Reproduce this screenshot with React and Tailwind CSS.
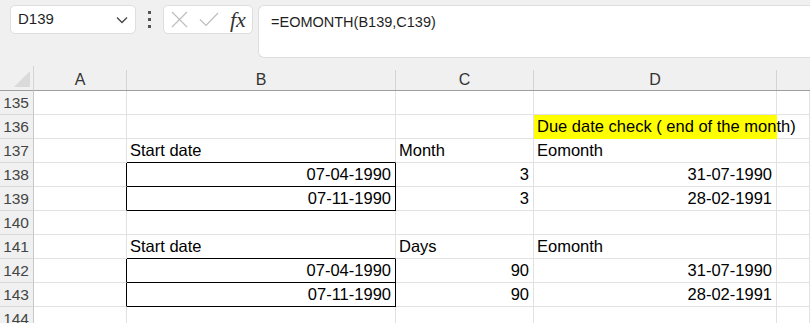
const cols = ['A', 'B', 'C', 'D'];

const rows = [
  { n: 135, cells: {} },
  { n: 136, cells: { D: { text: 'Due date check ( end of the month)', hl: true } } },
  { n: 137, cells: { B: { text: 'Start date' }, C: { text: 'Month' }, D: { text: 'Eomonth' } } },
  { n: 138, cells: { B: { text: '07-04-1990', right: true }, C: { text: '3', right: true }, D: { text: '31-07-1990', right: true } } },
  { n: 139, cells: { B: { text: '07-11-1990', right: true }, C: { text: '3', right: true }, D: { text: '28-02-1991', right: true } } },
  { n: 140, cells: {} },
  { n: 141, cells: { B: { text: 'Start date' }, C: { text: 'Days' }, D: { text: 'Eomonth' } } },
  { n: 142, cells: { B: { text: '07-04-1990', right: true }, C: { text: '90', right: true }, D: { text: '31-07-1990', right: true } } },
  { n: 143, cells: { B: { text: '07-11-1990', right: true }, C: { text: '90', right: true }, D: { text: '28-02-1991', right: true } } },
  { n: 144, cells: {} },
];

// rows whose B cell carries the black box
const boxed = [138, 139, 142, 143];

function cellClass(col, n) {
  let right = 'border-r-[#e1e1e1]';
  let bottom = 'border-b-[#e1e1e1]';
  if (col === 'A' && boxed.includes(n)) right = 'border-r-black';
  if (col === 'B' && boxed.includes(n)) { right = 'border-r-black'; bottom = 'border-b-black'; }
  if (col === 'B' && (n === 137 || n === 141)) bottom = 'border-b-black';
  return `${right} ${bottom}`;
}

function Toolbar() {
  return (
    <div className="flex h-[66px] bg-[#f0f0f0] pt-[5px] pl-[10px]">
      <div className="flex h-[29px] w-[126px] items-center justify-between rounded-[5px] border border-[#dedede] bg-white pl-[7px] pr-[7px]">
        <span className="text-[15px] text-[#1f1f1f]">D139</span>
        <svg width="12" height="8" viewBox="0 0 12 8" fill="none" stroke="#444" strokeWidth="1.3">
          <path d="M1 1.5l5 5 5-5" />
        </svg>
      </div>
      <div className="flex w-[27px] flex-col items-center gap-[4px] pt-[6px]">
        <span className="h-[3px] w-[3px] bg-[#555]"></span>
        <span className="h-[3px] w-[3px] bg-[#555]"></span>
        <span className="h-[3px] w-[3px] bg-[#555]"></span>
      </div>
      <div className="flex h-[29px] w-[90px] items-center rounded-[5px] border border-[#dedede] bg-white pl-[7px]">
        <svg width="17" height="17" viewBox="0 0 17 17" fill="none" stroke="#bdbdbd" strokeWidth="1.2">
          <path d="M1 1l15 15M16 1L1 16" />
        </svg>
        <svg className="ml-[11px]" width="20" height="15" viewBox="0 0 20 15" fill="none" stroke="#bdbdbd" strokeWidth="1.2">
          <path d="M1 7.5l6 6L19 1" />
        </svg>
        <span className="ml-[11px] font-['Liberation_Serif',serif] text-[22px] italic leading-none text-[#333]">fx</span>
      </div>
      <div className="ml-[5px] h-[53px] flex-1 rounded-l-[6px] border border-r-0 border-[#dedede] bg-white pl-[12px] pt-[4px]">
        <span className="text-[14.5px] text-[#1f1f1f]">=EOMONTH(B139,C139)</span>
      </div>
    </div>
  );
}

function Sheet() {
  return (
    <div className="grid grid-cols-[34px_93px_269px_138px_243px_1fr] bg-white">
      <div className="relative h-[25px] border-b border-r border-b-[#9e9e9e] border-r-[#d4d4d4] bg-[#f0f0f0]">
        <svg className="absolute bottom-[3px] right-[3px]" width="16" height="16" viewBox="0 0 16 16">
          <path d="M16 0V16H0Z" fill="#dadada" />
        </svg>
      </div>
      {[...cols, 'E'].map(c => (
        <div key={c} className="flex h-[25px] border-b border-b-[#9e9e9e] bg-[#f0f0f0] pt-[4px]">
          <div className={`flex flex-1 items-center justify-center text-[16px] text-[#333] ${c === 'E' ? '' : 'border-r border-r-[#d4d4d4]'}`}>
            {c === 'E' ? '' : c}
          </div>
        </div>
      ))}
      {rows.map(r => (
        <div key={r.n} className="contents">
          <div className="flex h-[24px] items-center justify-end border-b border-r border-b-[#d9d9d9] border-r-[#c8c8c8] bg-[#f0f0f0] pr-[4px] text-[15.5px] text-[#444]">
            {r.n}
          </div>
          {[...cols, 'E'].map(c => {
            const cell = r.cells[c];
            return (
              <div
                key={c}
                className={`flex h-[24px] items-center border-b border-r text-[16.5px] text-black ${cellClass(c, r.n)} ${cell && cell.right ? 'justify-end pr-[4px]' : 'pl-[3px]'} ${cell && cell.hl ? 'bg-[#ffff00] border-r-[#ffff00] border-b-[#ffff00]' : ''}`}
              >
                {cell && <span className="relative z-10 whitespace-nowrap">{cell.text}</span>}
              </div>
            );
          })}
        </div>
      ))}
    </div>
  );
}

export default function App() {
  return (
    <div className="h-[323px] w-[810px] overflow-hidden bg-white font-['Liberation_Sans',Arial,sans-serif]">
      <Toolbar />
      <Sheet />
    </div>
  );
}
